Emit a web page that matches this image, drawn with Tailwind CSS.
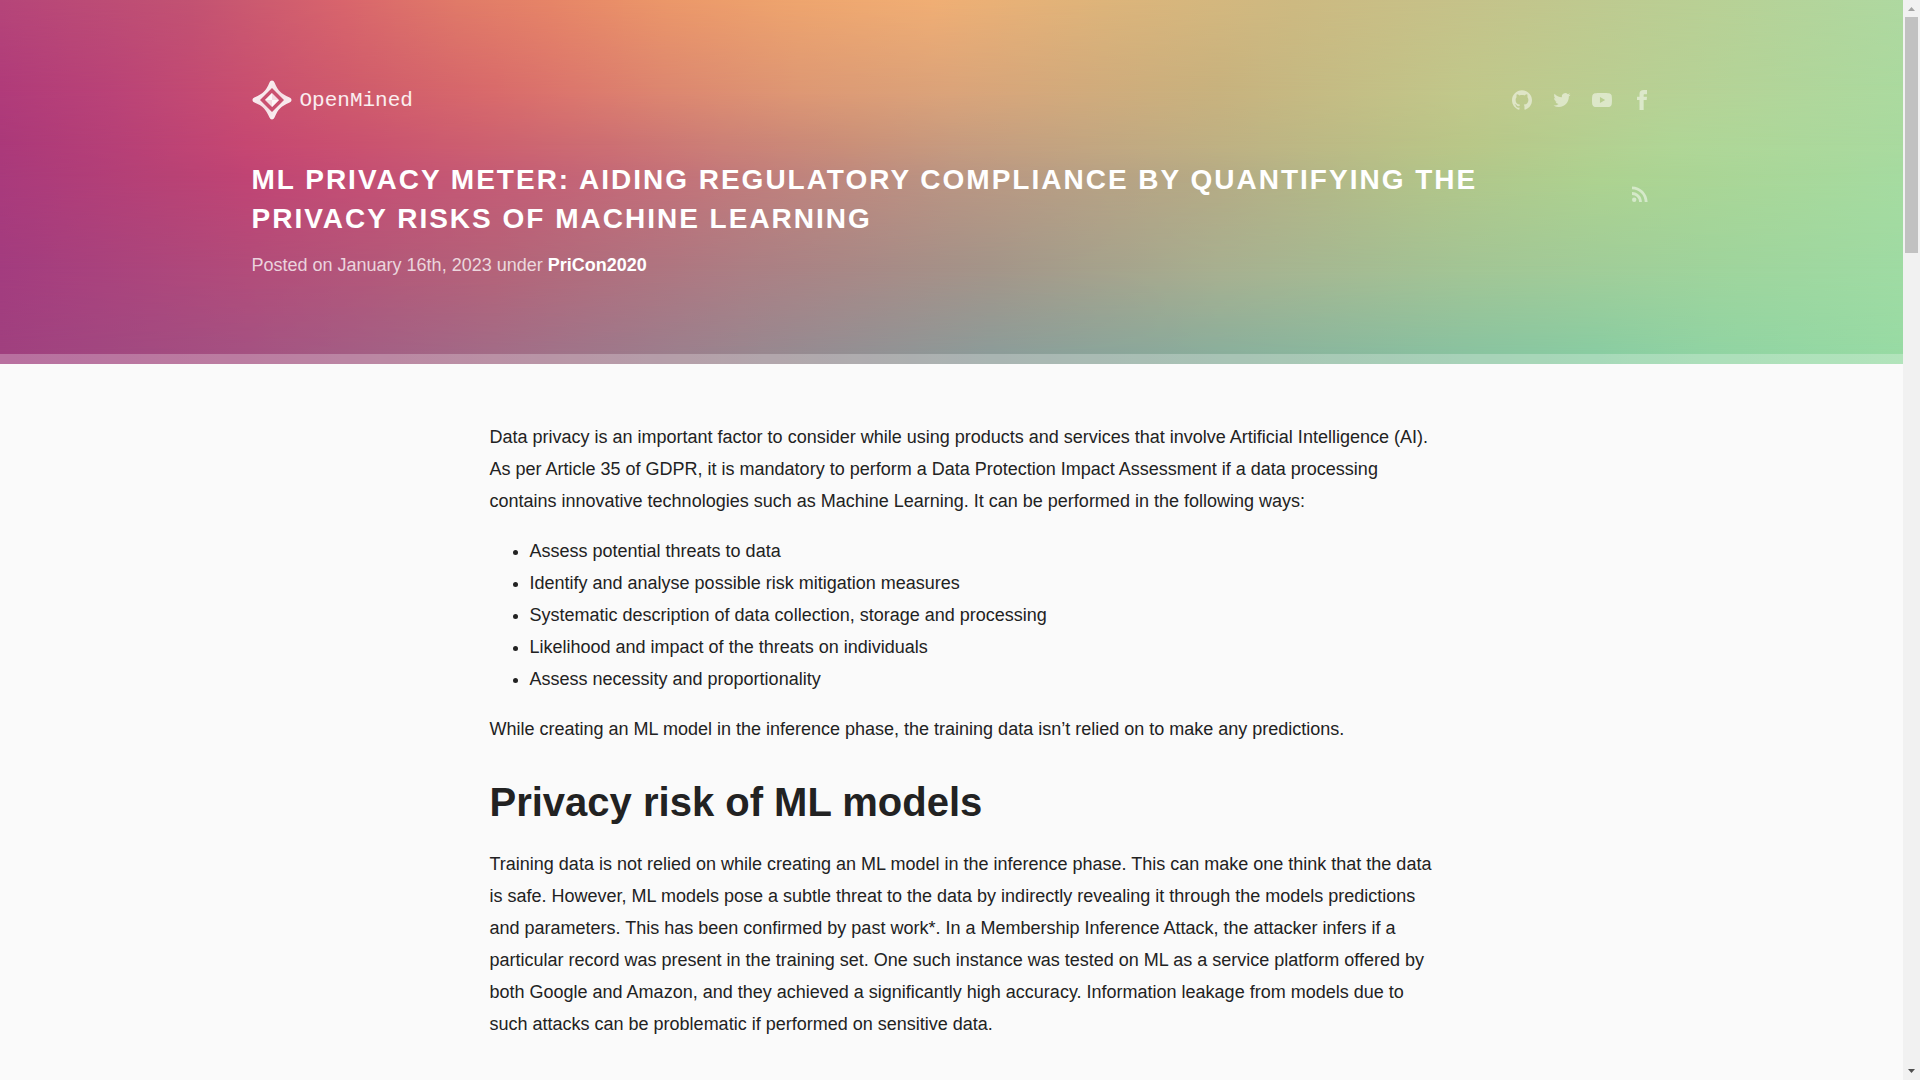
<!DOCTYPE html>
<html lang="en">
<head>
<meta charset="utf-8">
<title>ML Privacy Meter - OpenMined</title>
<script src="https://cdn.jsdelivr.net/npm/@tailwindcss/browser@4"></script>
</head>
<body class="flex h-screen overflow-hidden bg-[#fafafa] font-['Liberation_Sans',Arial,sans-serif] text-lg leading-8 text-[#222]">
<div class="h-full min-w-0 flex-1 overflow-hidden">
  <header class="relative isolate">
    <!-- Colour mesh: horizontal ramps that fade into each other from top to bottom -->
    <div class="absolute inset-0 -z-10" aria-hidden="true">
      <div class="absolute inset-0 bg-[linear-gradient(90deg,#a0407f_0%,#a55282_13%,#a36c87_26%,#9a868f_39%,#8d9c99_52%,#8baf9c_64%,#8ac3a0_77%,#8acda2_84%,#91d4a3_90%,#98dba4_100%)]"></div>
      <div class="absolute inset-0 bg-[linear-gradient(90deg,#a33c7f_0%,#b24c7a_13%,#b46379_26%,#ac7e84_39%,#a49589_52%,#a8b090_64%,#a3c595_77%,#9fd49c_90%,#9fdba3_100%)] [mask-image:linear-gradient(#000_74%,transparent_97%)]"></div>
      <div class="absolute inset-0 bg-[linear-gradient(90deg,#a93a7c_0%,#b84275_9%,#c04474_13%,#c44f74_19%,#c45f76_28%,#c37079_35%,#bf837d_42%,#ba9583_50%,#b5ab85_64%,#b2c489_75%,#add290_84%,#a5dba0_100%)] [mask-image:linear-gradient(#000_49%,transparent_74%)]"></div>
      <div class="absolute inset-0 bg-[linear-gradient(90deg,#ab397a_0%,#b64077_6%,#c64772_13%,#ca5270_19%,#cd5f70_25%,#cd6f73_32%,#cc8077_38%,#ca9079_45%,#c79b7f_50%,#bfb183_64%,#b9c788_77%,#b0d696_88%,#a9da9f_100%)] [mask-image:linear-gradient(#000_40%,transparent_49%)]"></div>
      <div class="absolute inset-0 bg-[linear-gradient(90deg,#b03b7a_0%,#ba4377_6%,#c94f70_13%,#d05c6c_19%,#d96b6b_26%,#dc776d_30%,#dd8770_35%,#de9874_42%,#dba47a_50%,#c8b27e_64%,#c1c88b_77%,#b5d397_90%,#abda9f_100%)] [mask-image:linear-gradient(#000_25%,transparent_40%)]"></div>
      <div class="absolute inset-0 bg-[linear-gradient(90deg,#b54579_0%,#c25272_10%,#d8656c_18%,#e07a68_24%,#e68567_29%,#eb9769_35%,#eea56e_42%,#f0ae74_49%,#ddb47a_58%,#cdb981_68%,#c2c58c_80%,#b8d095_90%,#aed8a0_100%)] [mask-image:linear-gradient(#000_0%,transparent_25%)]"></div>
    </div>
    <div class="mx-auto max-w-[1400px] pt-20 pb-[73px]">
      <div class="flex h-10 items-center justify-between">
        <a href="#" class="flex items-center gap-2 text-white/90">
          <svg class="size-10" viewBox="0 0 40 40" aria-hidden="true">
            <defs><linearGradient id="arm" x1="0" y1="0" x2="1" y2="1"><stop offset="0" stop-color="#fff"/><stop offset=".5" stop-color="#fff" stop-opacity=".8"/><stop offset="1" stop-color="#fff"/></linearGradient></defs>
            <path fill="url(#arm)" fill-rule="evenodd" d="M20 .5c1.200 0 2 .8 2.500 1.900 2 4.800 3.800 7.400 5.700 9.400s4.600 3.700 9.400 5.700c1.200.5 1.900 1.500 1.900 2.500s-.7 2-1.900 2.500c-4.800 2-7.400 3.800-9.400 5.700s-3.700 4.600-5.700 9.400c-.5 1.200-1.500 1.900-2.500 1.900s-2-.7-2.500-1.900c-2-4.800-3.800-7.400-5.700-9.400s-4.600-3.700-9.400-5.700C1.200 22 .5 21 .5 20s.7-2 1.900-2.500c4.800-2 7.400-3.800 9.400-5.700s3.700-4.600 5.700-9.400C18 1.300 18.800.5 20 .5zM20 8 8 20 20 32 32 20z"/>
            <path fill="#fff" fill-opacity=".8" d="M20 13 27 20 20 27 13 20z"/>
            <path fill="#fff" fill-opacity=".8" d="M20 13V20h-7zM20 27V20h7z"/>
          </svg>
          <span class="pt-[2px] font-['Liberation_Mono',monospace] text-[21px]">OpenMined</span>
        </a>
        <nav class="flex gap-5 text-white/50" aria-label="Social">
          <a href="#" aria-label="GitHub"><svg class="size-5" viewBox="0 0 24 24" fill="currentColor"><path d="M12 .297c-6.630 0-12 5.373-12 12 0 5.303 3.438 9.800 8.205 11.385.6.113.82-.258.82-.577 0-.285-.010-1.040-.015-2.040-3.338.724-4.042-1.610-4.042-1.610C4.422 18.070 3.633 17.700 3.633 17.700c-1.087-.744.084-.729.084-.729 1.205.084 1.838 1.236 1.838 1.236 1.070 1.835 2.809 1.305 3.495.998.108-.776.417-1.305.760-1.605-2.665-.3-5.466-1.332-5.466-5.930 0-1.310.465-2.380 1.235-3.220-.135-.303-.540-1.523.105-3.176 0 0 1.005-.322 3.300 1.230.960-.267 1.980-.399 3-.405 1.020.006 2.040.138 3 .405 2.280-1.552 3.285-1.230 3.285-1.230.645 1.653.240 2.873.120 3.176.765.840 1.230 1.910 1.230 3.220 0 4.610-2.805 5.625-5.475 5.920.420.360.810 1.096.810 2.220 0 1.606-.015 2.896-.015 3.286 0 .315.210.690.825.570C20.565 22.092 24 17.592 24 12.297c0-6.627-5.373-12-12-12"/></svg></a>
          <a href="#" aria-label="Twitter"><svg class="size-5" viewBox="-2 -2 28 28" fill="currentColor"><path d="M23.953 4.570a10 10 0 01-2.825.775 4.958 4.958 0 002.163-2.723c-.951.555-2.005.959-3.127 1.184a4.920 4.920 0 00-8.384 4.482C7.690 8.095 4.067 6.130 1.640 3.162a4.822 4.822 0 00-.666 2.475c0 1.710.870 3.213 2.188 4.096a4.904 4.904 0 01-2.228-.616v.060a4.923 4.923 0 003.946 4.827 4.996 4.996 0 01-2.212.085 4.936 4.936 0 004.604 3.417 9.867 9.867 0 01-6.102 2.105c-.390 0-.779-.023-1.170-.067a13.995 13.995 0 007.557 2.209c9.053 0 13.998-7.496 13.998-13.985 0-.210 0-.420-.015-.630A9.935 9.935 0 0024 4.590z"/></svg></a>
          <a href="#" aria-label="YouTube"><svg class="size-5" viewBox="0 0 24 24" fill="currentColor"><path d="M23.498 6.186a3.016 3.016 0 0 0-2.122-2.136C19.505 3.545 12 3.545 12 3.545s-7.505 0-9.377.505A3.017 3.017 0 0 0 .502 6.186C0 8.070 0 12 0 12s0 3.930.502 5.814a3.016 3.016 0 0 0 2.122 2.136c1.871.505 9.376.505 9.376.505s7.505 0 9.377-.505a3.015 3.015 0 0 0 2.122-2.136C24 15.930 24 12 24 12s0-3.930-.502-5.814zM9.545 15.568V8.432L15.818 12l-6.273 3.568z"/></svg></a>
          <a href="#" aria-label="Facebook"><svg class="size-5" viewBox="0 0 24 24" fill="currentColor"><path d="M9 8H6v4h3v12h5V12h3.642L18 8h-4V6.333C14 5.378 14.192 5 15.115 5H18V0h-3.808C10.596 0 9 1.583 9 4.615V8z"/></svg></a>
        </nav>
      </div>
      <div class="mt-10 flex items-start justify-between">
        <div>
          <h1 class="max-w-[1240px] text-[28px] leading-[39px] font-bold tracking-[2px] text-white uppercase">ML Privacy Meter: Aiding Regulatory Compliance by Quantifying the Privacy Risks of Machine Learning</h1>
          <p class="mt-[11px] text-white/75">Posted on January 16th, 2023 under <a href="#" class="font-bold text-white">PriCon2020</a></p>
        </div>
        <a href="#" aria-label="RSS feed" class="mt-[22px] text-white/50"><svg class="size-6" viewBox="0 0 24 24" fill="currentColor"><circle cx="6.200" cy="17.800" r="2.200"/><path d="M4 4.400v2.900c7 0 12.700 5.700 12.700 12.700h2.900C19.600 11.400 12.600 4.400 4 4.400zm0 5.700v2.800c3.900 0 7.100 3.200 7.100 7.100h2.800c0-5.500-4.400-9.900-9.900-9.900z"/></svg></a>
      </div>
    </div>
    <div class="h-[10px] bg-white/25"></div>
  </header>

  <main class="mx-auto max-w-[924px] pt-[57px] whitespace-nowrap">
    <p>Data privacy is an important factor to consider while using products and services that involve Artificial Intelligence (AI).<br>As per Article 35 of GDPR, it is mandatory to perform a Data Protection Impact Assessment if a data processing<br>contains innovative technologies such as Machine Learning. It can be performed in the following ways:</p>
    <ul class="my-[18px] list-disc pl-10">
      <li>Assess potential threats to data</li>
      <li>Identify and analyse possible risk mitigation measures</li>
      <li>Systematic description of data collection, storage and processing</li>
      <li>Likelihood and impact of the threats on individuals</li>
      <li>Assess necessity and proportionality</li>
    </ul>
    <p>While creating an ML model in the inference phase, the training data isn’t relied on to make any predictions.</p>
    <h2 class="mt-[33px] mb-[22px] text-[40px] leading-[48px] font-bold">Privacy risk of ML models</h2>
    <p>Training data is not relied on while creating an ML model in the inference phase. This can make one think that the data<br>is safe. However, ML models pose a subtle threat to the data by indirectly revealing it through the models predictions<br>and parameters. This has been confirmed by past work*. In a Membership Inference Attack, the attacker infers if a<br>particular record was present in the training set. One such instance was tested on ML as a service platform offered by<br>both Google and Amazon, and they achieved a significantly high accuracy. Information leakage from models due to<br>such attacks can be problematic if performed on sensitive data.</p>
  </main>
</div>

<!-- Scrollbar -->
<div class="flex h-full w-[17px] shrink-0 flex-col items-center bg-[#f1f1f1]" aria-hidden="true">
  <svg class="h-[17px] w-[17px] shrink-0" viewBox="0 0 17 17" fill="#a3a3a3"><path d="M5 11 8.500 7 12 11z"/></svg>
  <div class="h-[236px] w-[13px] bg-[#c1c1c1]"></div>
  <svg class="mt-auto h-[17px] w-[17px] shrink-0" viewBox="0 0 17 17" fill="#505050"><path d="M5 6 8.500 10 12 6z"/></svg>
</div>
</body>
</html>
